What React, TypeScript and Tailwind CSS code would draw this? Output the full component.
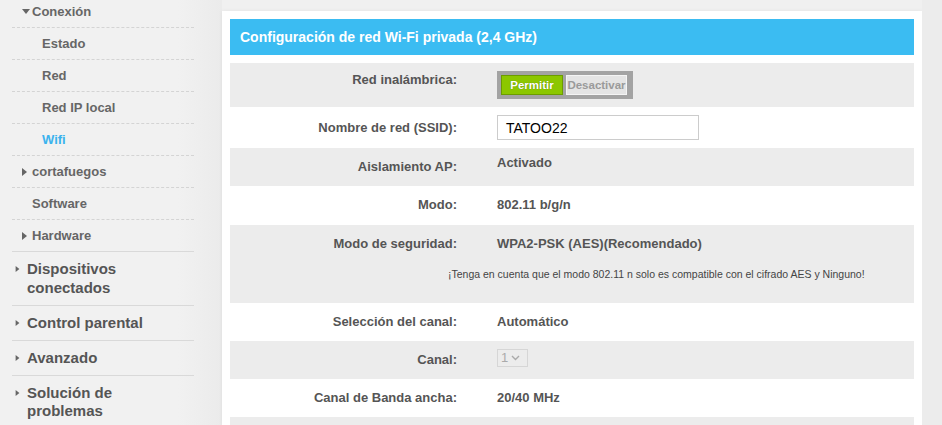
import React from "react";

const font = { fontFamily: '"Liberation Sans", Arial, sans-serif' };

function TriRight({ className = "" }: { className?: string }) {
  return (
    <span
      className={`inline-block w-0 h-0 border-y-[4px] border-y-transparent border-l-[5px] border-l-[#666] ${className}`}
    />
  );
}

function SubItem({
  label,
  indent,
  arrow,
  active,
  solid,
}: {
  label: string;
  indent: "sub" | "group";
  arrow?: "down" | "right";
  active?: boolean;
  solid?: boolean;
}) {
  return (
    <div
      className={`h-[32px] flex items-center border-b ${
        solid ? "border-solid border-[#d9d9d9]" : "border-dashed border-[#d4d4d4]"
      } ${indent === "sub" ? "pl-[20px]" : "pl-[10px]"}`}
    >
      <span className="w-[10px] flex items-center">
        {arrow === "down" && (
          <span className="inline-block w-0 h-0 border-x-[4px] border-x-transparent border-t-[5px] border-t-[#666]" />
        )}
        {arrow === "right" && <TriRight />}
      </span>
      <span
        className={`text-[13px] font-bold ${active ? "text-[#3bb3ee]" : "text-[#666]"}`}
      >
        {label}
      </span>
    </div>
  );
}

function TopItem({ label }: { label: string }) {
  return (
    <div className="flex items-start pt-[8px] pb-[7.5px] border-b border-[#d9d9d9] pl-[3px]">
      <span className="w-[12px] h-[18.5px] flex items-center">
        <TriRight className="scale-75" />
      </span>
      <span className="w-[150px] text-[15px] leading-[18.5px] font-bold text-[#555]">
        {label}
      </span>
    </div>
  );
}

function Row({
  label,
  gray,
  className = "",
  labelClass = "",
  children,
}: {
  label: string;
  gray?: boolean;
  className?: string;
  labelClass?: string;
  children?: React.ReactNode;
}) {
  return (
    <div className={`${gray ? "bg-[#ececec]" : "bg-white"} ${className}`}>
      <div className="flex items-start">
        <div
          className={`w-[227px] shrink-0 text-right text-[13px] leading-[18px] font-bold text-[#555] ${labelClass}`}
        >
          {label}
        </div>
        <div className="pl-[40px] text-[13px] leading-[18px] font-bold text-[#555]">
          {children}
        </div>
      </div>
    </div>
  );
}

export default function App() {
  return (
    <div className="w-[942px] h-[425px] overflow-hidden bg-[#f0f0f0] flex" style={font}>
      {/* Sidebar */}
      <aside className="w-[222px] shrink-0 bg-gradient-to-r from-[#f1f1f1] from-80% to-[#ebebeb]">
        <div className="ml-[12px] w-[182px] mt-[-4px]">
          <SubItem label="Conexión" indent="group" arrow="down" />
          <SubItem label="Estado" indent="sub" />
          <SubItem label="Red" indent="sub" />
          <SubItem label="Red IP local" indent="sub" />
          <SubItem label="Wifi" indent="sub" active />
          <SubItem label="cortafuegos" indent="group" arrow="right" />
          <SubItem label="Software" indent="group" />
          <SubItem label="Hardware" indent="group" arrow="right" solid />
          <TopItem label="Dispositivos conectados" />
          <TopItem label="Control parental" />
          <TopItem label="Avanzado" />
          <TopItem label="Solución de problemas" />
        </div>
      </aside>

      {/* Main panel */}
      <main className="w-[700px] shrink-0 mt-[11px] bg-white p-[8px] shadow-[0_0_4px_rgba(0,0,0,0.06)]">
        <div className="h-[36px] bg-[#3bbcf2] flex items-center pl-[10px] text-white text-[14px] font-bold">
          Configuración de red Wi-Fi privada (2,4 GHz)
        </div>

        <div className="mt-[8px]">
          <Row label="Red inalámbrica:" gray className="py-[8px]">
            <div className="flex w-[136px] h-[28px] border-[3px] border-[#a3a3a3] bg-[#a3a3a3] p-[1px] gap-[3px]">
              <div className="w-[62px] h-full bg-[#8cc700] border border-[#6c9c00] flex items-center justify-center text-white text-[11.5px] font-bold [text-shadow:0_0_1px_#557a00]">
                Permitir
              </div>
              <div className="w-[61px] h-full bg-[#e4e4e4] border border-[#f4f4f4] flex items-center justify-center text-[#9a9a9a] text-[11.5px] font-bold whitespace-nowrap">
                Desactivar
              </div>
            </div>
          </Row>

          <Row label="Nombre de red (SSID):" className="py-[8px]" labelClass="pt-[4px]">
            <div className="w-[202px] h-[25px] border border-[#cccccc] bg-white flex items-center pl-[8px] text-[14px] font-normal text-black">
              TATOO22
            </div>
          </Row>

          <Row label="Aislamiento AP:" gray className="py-[10px]">
            <div className="mt-[-4px]">Activado</div>
          </Row>

          <Row label="Modo:" className="pt-[10px] pb-[11px]">
            802.11 b/g/n
          </Row>

          <div className="bg-[#ececec] pt-[10px] pb-[22px]">
            <div className="flex items-start">
              <div className="w-[227px] shrink-0 text-right text-[13px] leading-[18px] font-bold text-[#555]">
                Modo de seguridad:
              </div>
              <div className="pl-[40px] text-[13px] leading-[18px] font-bold text-[#555]">
                WPA2-PSK (AES)(Recomendado)
              </div>
            </div>
            <div className="mt-[14px] pl-[218px] text-[10.5px] leading-[14px] text-[#444]">
              ¡Tenga en cuenta que el modo 802.11 n solo es compatible con el cifrado AES y Ninguno!
            </div>
          </div>

          <Row label="Selección del canal:" className="py-[10px]">
            Automático
          </Row>

          <Row label="Canal:" gray className="py-[10px]">
            <div className="mt-[-2px] w-[31px] h-[18px] border border-[#d6d6d6] flex items-center pl-[3px] gap-[3px] text-[13px] font-normal text-[#aaa]">
              1
              <svg width="9" height="6" viewBox="0 0 9 6" fill="none">
                <path d="M1 1l3.5 3.5L8 1" stroke="#aaa" strokeWidth="1.4" />
              </svg>
            </div>
          </Row>

          <Row label="Canal de Banda ancha:" className="py-[10px]">
            20/40 MHz
          </Row>

          <Row label="" gray className="pt-[8px] h-[40px]">
            <div className="w-[202px] h-[25px] border border-[#cccccc] bg-white" />
          </Row>
        </div>
      </main>

      <div className="flex-1 bg-[#ececec]" />
    </div>
  );
}
